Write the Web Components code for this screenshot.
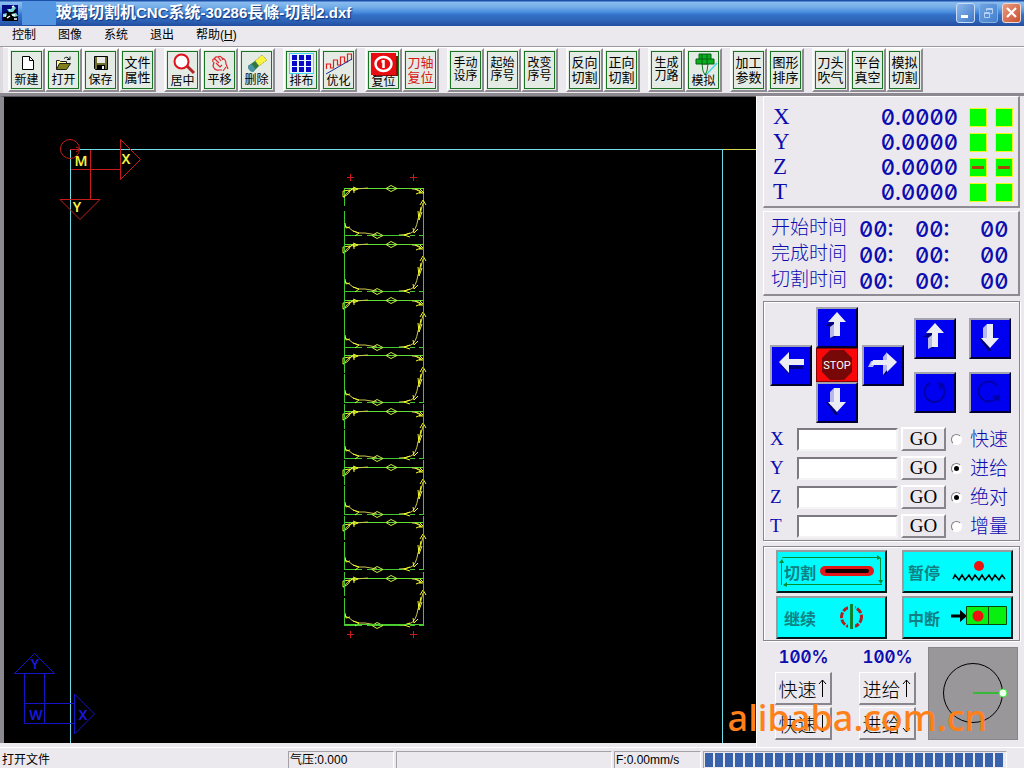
<!DOCTYPE html>
<html lang="zh-CN">
<head>
<meta charset="utf-8">
<title>玻璃切割机CNC系统</title>
<style>
  html, body { margin: 0; height: 100%; }
  body { background: #ebe9ed; }
</style>
</head>
<body>
<cnc-app></cnc-app>
<script>
const define = (name, html, setup) => {
  const template = document.createElement('template');
  template.innerHTML = html;
  customElements.define(name, class extends HTMLElement {
    constructor() {
      super();
      this.attachShadow({ mode: 'open' }).append(template.content.cloneNode(true));
    }
    connectedCallback() {
      if (setup && !this.ready) setup(this, this.shadowRoot);
      this.ready = true;
    }
  });
};

/* ---------- title bar ---------- */
define('title-bar', `
<style>
  :host { display: flex; align-items: center; height: 26px; box-sizing: border-box; padding: 0 3px 1px 2px; color: #fff;
    background: linear-gradient(#1c4fa8 0, #1c4fa8 1px, #8abdf0 2px, #74ade8 7px, #4a8ede 12px, #3370c8 15px, #2f66ba 20px, #2450a4 25px); }
  .logo { width: 18px; height: 18px; flex: none; }
  .patch { width: 34px; height: 24px; margin-left: 2px; background: #5596e3; flex: none; }
  h1 { flex: 1; margin: 0; font-size: 16px; line-height: 24px; font-weight: 700; white-space: nowrap; text-shadow: 1px 1px 1px #10357c; }
  h1 span { font-size: 15px; }
  .controls { display: flex; gap: 4px; }
  button { width: 19px; height: 20px; padding: 0; border: 1px solid #c8dcf6; border-radius: 3px; background: linear-gradient(135deg, #8db8ec, #3f78c8); display: grid; place-items: center; }
  button.dim { border-color: #86b0e4; background: linear-gradient(135deg, #6ea3e2, #4580cc); }
  button.close { border-color: #f0d8d0; background: linear-gradient(135deg, #e99a80, #c9512f); }
  svg { display: block; }
</style>
<svg class="logo" viewBox="0 0 18 18"><rect x="0" y="1" width="16" height="16" fill="#020a80"/><path d="M1 12 5 7 8 9 12 3 15 6 13 9 16 11V17H1Z" fill="#000"/><path d="M5 5h4l3-3 2 2-3 4H7ZM1 10l4-1-1 4H1Zm8 0 5-1 2 3-4 1Z" fill="#7fd8d0"/><path d="M10 3l2-1M3 11l1 1M10 11h3M7 6h1M5 14l3-2M12 15h3" stroke="#fff" stroke-width="1.5"/></svg>
<span class="patch"></span>
<h1>玻璃切割机<span>CNC</span>系统<span>-30286</span>長條<span>-</span>切割<span>2.dxf</span></h1>
<div class="controls">
  <button aria-label="最小化"><svg width="15" height="16"><path d="M3 11.5h7" stroke="#fff" stroke-width="3"/></svg></button>
  <button class="dim" aria-label="还原"><svg width="15" height="16" fill="none" stroke="#b4d0f2"><path d="M5.500 6V3.500h6v5h-2M5.500 4.500h6M3.500 7.500h5v5h-5ZM3.500 8.500h5"/></svg></button>
  <button class="close" aria-label="关闭"><svg width="15" height="16"><path d="M3 3 12 12M12 3 3 12" stroke="#fff" stroke-width="2.200"/></svg></button>
</div>`);

/* ---------- menu ---------- */
define('menu-bar', `
<style>
  :host { display: block; height: 20px; border-bottom: 1px solid #9c9aa0; box-shadow: 0 1px #fff; }
  nav { display: flex; gap: 22px; padding: 0 12px; }
  a { color: #000; text-decoration: none; font-size: 12px; line-height: 18px; white-space: nowrap; }
</style>
<nav><a href="#control">控制</a><a href="#image">图像</a><a href="#system">系统</a><a href="#exit">退出</a><a href="#help">帮助(<u>H</u>)</a></nav>`);

/* ---------- tool button ---------- */
define('tool-button', `
<style>
  :host { display: block; width: 37px; color: #000; }
  button { font: inherit; color: inherit; width: 100%; height: 44px; box-sizing: border-box; padding: 1px; display: flex; background: #e4ebe4;
    border: 2px solid; border-color: #fbfbfb #8e8c92 #8e8c92 #fbfbfb; }
  .face { flex: 1; min-width: 0; height: 38px; box-sizing: border-box; border: 1px solid #1a7424; display: flex; flex-direction: column; align-items: center; justify-content: center; }
  .label { display: block; font-size: 12px; line-height: 13px; white-space: pre; text-align: center; }
  :host([large]) .label { font-size: 13px; line-height: 15px; }
  :host([alert]) { color: #d81818; }
  ::slotted(svg) { display: block; flex: none; }
</style>
<button><span class="face"><slot name="icon"></slot><span class="label"><slot></slot></span></span></button>`);

const icons = {
  newFile: `<svg slot="icon" width="26" height="20"><path d="M8.500 2.500h7l4 4v9h-11Z" fill="#fff" stroke="#000"/><path d="M15.500 2.500v4h4" fill="none" stroke="#000"/></svg>`,
  open: `<svg slot="icon" width="26" height="20"><path d="M5.500 15.500v-9h3l1 1h6v2" fill="#ffff90" stroke="#222"/><path d="M5.500 15.500 8.500 9.500h11l-4 6Z" fill="#80801a" stroke="#222"/><path d="M13 4.500q3-3 5.500 1M16 5.500h3v-3" fill="none" stroke="#111"/></svg>`,
  save: `<svg slot="icon" width="26" height="20"><path d="M6.500 2.500h13v13h-12l-1-1Z" fill="#70702c" stroke="#000"/><path d="M9 3h8v6H9Z" fill="#e8e8e8"/><path d="M9 11h8v4H9Z" fill="#000"/><path d="M14 12h2v3h-2Z" fill="#eee"/></svg>`,
  centre: `<svg slot="icon" width="28" height="22"><path d="m18 13 7 7" stroke="#b02828" stroke-width="3"/><circle cx="12.500" cy="8.500" r="7" fill="#fff" stroke="#e0101c" stroke-width="2"/></svg>`,
  pan: `<svg slot="icon" width="28" height="20" fill="none" stroke="#e02830" stroke-width="1.200"><path d="M7 8q-1-4 2-3l4 4M9 6q-1-4 3-3l3 4M12 3q3-2 5 3M16 4q4 1 4 6l2 5M8 8l-1 4q2 5 6 4h3M10 9l4 4 2-2M20 13l-3 4"/></svg>`,
  erase: `<svg slot="icon" width="28" height="21"><path d="m12 8 7-6 5 5-8 6Z" fill="#f8f440" stroke="#a09a20" stroke-dasharray="1 1"/><path d="m5 13 7-5 4 5-6 6q-5-1-5-6Z" fill="#30783c"/><path d="m5 13 3-2q4 3 4 6l-2 2q-5-1-5-6Z" fill="#4a94a8"/></svg>`,
  grid: `<svg slot="icon" width="28" height="23"><rect x="1.500" y="1.500" width="24" height="20" fill="#e6f6fc" stroke="#40d8f0"/><path d="M4 3h5v5H4Zm7 0h5v5h-5Zm7 0h5v5h-5ZM4 9h5v5H4Zm7 0h5v5h-5Zm7 0h5v5h-5ZM4 15h5v5H4Zm7 0h5v5h-5Zm7 0h5v5h-5Z" fill="#0808c8"/></svg>`,
  optimise: `<svg slot="icon" width="28" height="23"><path d="M1.500 17v-5h4v4h3V8h4v5h3V5h4v5h3V2h4v6" fill="none" stroke="#e02020" stroke-width="1.200"/><path d="M1 22 27 7" stroke="#202890"/></svg>`,
  reset: `<svg slot="icon" width="28" height="24"><path d="M3 4h25v20H3Z" fill="#8c0c0c"/><path d="M1 1h25v22H1Z" fill="#e80c10"/><ellipse cx="13.500" cy="12" rx="8" ry="7" fill="none" stroke="#fff" stroke-width="2.500"/><path d="M13.500 8v8M11.500 9.500h3" stroke="#fff" stroke-width="2.500"/></svg>`,
  simulate: `<svg slot="icon" width="28" height="23"><path d="m16 23 11-12" stroke="#40d8e0" stroke-width="1.500"/><path d="M12 12h6l-1 7-2 4-2-4Z" fill="#e8e8e8" stroke="#0a7818"/><path d="M9 2h12v5h3v5H6V7h3Z" fill="#08b020" stroke="#046010"/><path d="M12 2v10M17 2v10M9 7h12" stroke="#046010"/></svg>`
};

define('tool-bar', `
<style>
  :host { display: flex; gap: 8px; padding: 1px 8px 0; height: 45px; border-bottom: 3px solid #8c8a90; box-shadow: inset 3px 0 #dcdade; }
  .group { display: flex; flex: none; }
</style>`, (host, root) => {
  const groups = [
    [['新建', 'newFile'], ['打开', 'open'], ['保存', 'save'], ['文件\n属性', '', 'large']],
    [['居中', 'centre'], ['平移', 'pan'], ['删除', 'erase']],
    [['排布', 'grid'], ['优化', 'optimise']],
    [['复位', 'reset'], ['刀轴\n复位', '', 'large alert']],
    [['手动\n设序'], ['起始\n序号'], ['改变\n序号']],
    [['反向\n切割', '', 'large'], ['正向\n切割', '', 'large']],
    [['生成\n刀路'], ['模拟', 'simulate']],
    [['加工\n参数', '', 'large'], ['图形\n排序', '', 'large']],
    [['刀头\n吹气', '', 'large'], ['平台\n真空', '', 'large'], ['模拟\n切割', '', 'large']]
  ];
  for (const g of groups) {
    const div = document.createElement('div');
    div.className = 'group';
    div.innerHTML = g.map(([t, i, a]) => `<tool-button ${a || ''}>${i ? icons[i] : ''}${t}</tool-button>`).join('');
    root.append(div);
  }
});

/* ---------- drawing area ---------- */
define('cut-canvas', `
<style>
  :host { display: block; background: #000; border-left: 4px solid #8c8a90; border-top: 1px solid #55535a; min-width: 0; overflow: hidden; position: relative; }
  svg { position: absolute; inset: 0; width: 100%; height: 100%; display: block; }
  text { font-family: "Noto Sans", sans-serif; font-weight: 600; font-size: 14px; text-anchor: middle; }
</style>
<svg viewBox="4 97 752 646" preserveAspectRatio="xMinYMin slice" fill="none">
  <defs>
    <g id="piece">
      <path d="M344.500 188v18M344.500 211v25M423.500 188v48" stroke="#40c830"/>
      <path d="M344 188.500h80" stroke="#60e030"/>
      <path d="M344 235.500h18M367 235.500h38M410 235.500h5M419 235.500h5" stroke="#40c830"/>
      <path d="M344 198q2-8 12-9l12-1M412 189q8 0 10 4M423 203q-2 9-5 16-2 12-7 14-4 2-12 2M345 226q5 2 8 5 5 3 12 2l12 2" stroke="#d0c850"/>
      <path d="M386 188.500l5-3 6 3-6 3ZM372 235.500l5-3 6 3-6 3Z" stroke="#c8f048"/>
      <path d="M343 197v-6l7-1q0 4-7 7M349 191l5-3v5M353 187l5 2-5 2M415 189l6 3-5 2M420 189l4 4h-5M420 205l3-5 3 5M418 211l1 9 3-8M419 217l2-10M413 228l1 5 4-4M410 233l-6 2 6 2M345 223l1 5 4-1M353 231l6 2-4 3" stroke="#f0f828"/>
    </g>
    <path id="mark" d="M-3 .5h7M.5-3v7" stroke="#d01818"/>
  </defs>
  <path d="M70.500 149v594M70 149.500h652M722.500 149v594" stroke="#70dce8"/>
  <path d="M723 149.500h33" stroke="#d0d850"/>
  <g stroke="#c81c1c"><circle cx="70" cy="149" r="9.500"/><path d="M70 149.500h10M76 147l4 2-4 3M71 169.500h49M90.500 150v49M120.500 139.500v40l20-20ZM60 199.500h40l-20 20Z"/></g>
  <g fill="#f8f040"><text x="81" y="166">M</text><text x="126" y="164">X</text><text x="77" y="212">Y</text></g>
  <g stroke="#1414c8"><path d="M14.500 673.500h40l-20-20ZM24.500 674v49.500h50M44.500 674v49M25 703.500h50M74.500 694v40l20-20Z"/></g>
  <g fill="#1818e0"><text x="35" y="669">Y</text><text x="36" y="720">W</text><text x="83" y="720">X</text></g>
  <use href="#piece"/><use href="#piece" y="56"/><use href="#piece" y="112"/><use href="#piece" y="167"/>
  <use href="#piece" y="223"/><use href="#piece" y="279"/><use href="#piece" y="334"/><use href="#piece" y="390"/>
  <path d="M344.500 236v390M423.500 236v390" stroke="#40c830" stroke-dasharray="22 4 28 2"/>
  <path d="M344 624.500h80" stroke="#50d030"/>
  <use href="#mark" x="350" y="177"/><use href="#mark" x="413" y="177"/><use href="#mark" x="350" y="634"/><use href="#mark" x="413" y="634"/>
</svg>`);

/* ---------- axis positions ---------- */
define('axis-readout', `
<style>
  :host { display: block; padding: 7px 5px 2px 9px; border: 1px solid; border-width: 1px 2px 2px 1px; border-color: #fff #8e8c92 #8e8c92 #fff; color: #0c0cb0; }
  .row { display: grid; grid-template-columns: 1fr auto 18px 18px; column-gap: 8px; align-items: center; height: 25px; }
  .axis { font: 23px "Liberation Serif", serif; }
  .value { font: 500 22px/25px Inter, sans-serif; font-feature-settings: "zero", "tnum"; padding-right: 3px; }
  i { display: grid; place-items: center; height: 19px; box-sizing: border-box; background: #0f0; border: 1px solid #f0f820; }
  i[off]::after { content: ""; width: 12px; height: 3px; background: #a84808; }
</style>`, (host, root) => {
  for (const a of 'XYZT') {
    const row = document.createElement('div');
    row.className = 'row';
    const lamp = a === 'Z' ? '<i off></i>' : '<i></i>';
    row.innerHTML = `<span class="axis">${a}</span><span class="value">0.0000</span>${lamp}${lamp}`;
    root.append(row);
  }
});

/* ---------- times ---------- */
define('time-readout', `
<style>
  :host { display: block; padding: 4px 5px 0 7px; border: 1px solid; border-width: 1px 2px 2px 1px; border-color: #fff #8e8c92 #8e8c92 #fff; color: #0c0cb0; }
  .row { display: grid; grid-template-columns: 88px 56px 65px 1fr; height: 26px; line-height: 26px; }
  .name { font-size: 19px; font-weight: 300; line-height: 24px; }
  .num { font: 500 22px/26px Inter, sans-serif; font-feature-settings: "zero", "tnum"; }
</style>`, (host, root) => {
  for (const n of ['开始时间', '完成时间', '切割时间']) {
    const row = document.createElement('div');
    row.className = 'row';
    row.innerHTML = `<span class="name">${n}</span><span class="num">00:</span><span class="num">00:</span><span class="num">00</span>`;
    root.append(row);
  }
});

/* ---------- jog buttons ---------- */
const ARROWS = {
  up: `<path d="M7 17 19 8v18l-3 3-4-3v-9Z" fill="#000078"/><path d="m12 18 4-3v12l-4 2Z" fill="#b8b8ec"/><path d="M19 3 28 13h-6v14h-6V13h-6Z" fill="#ececf4"/>`,
  down: `<path d="M8 18 17 31l3 0-5-13Z" fill="#000078"/><path d="m12 8 4-4v14l-4 3Z" fill="#b8b8ec"/><path d="M16 4h6v14h6l-9 10-9-10h6Z" fill="#ececf4"/>`,
  left: `<path d="m8 18 9 9v-5h14v-3Z" fill="#000078"/><path d="M7 15 17 5v7h15v6H17v8Z" fill="#ececf4"/>`,
  right: `<path d="M11 20h9v9l8-10" fill="#000078"/><path d="m4 20 3-6h5l-3 6ZM19 28V10l4-5v18Z" fill="#b8b8ec"/><path d="M9 13h14V6l10 9-10 10v-7H7Z" fill="#ececf4"/>`,
  ccw: `<path d="M14 9A10 10 0 1 0 27 13" fill="none" stroke="#0000a8" stroke-width="2"/><path d="m22 8 7 2-5 6Z" fill="#0000a8"/>`,
  cw: `<path d="M26 23A10 10 0 1 1 26 12" fill="none" stroke="#0000a8" stroke-width="2"/><path d="m21 22 8-1-1 7Z" fill="#0000a8"/>`
};
define('jog-button', `
<style>
  :host { display: block; }
  button { display: block; width: 42px; height: 41px; padding: 0; box-sizing: border-box; border: 2px solid; border-color: #a4a4b0 #000030 #000030 #a4a4b0; background: #0000f0; }
  svg { display: block; width: 38px; height: 37px; }
</style>
<button><svg viewBox="0 0 38 37"></svg></button>`, (host, root) => {
  root.querySelector('svg').innerHTML = ARROWS[host.getAttribute('dir')];
  root.querySelector('button').setAttribute('aria-label', host.getAttribute('dir'));
});

define('jog-panel', `
<style>
  :host { display: block; padding: 5px 5px 3px 6px; border: 1px solid #88868c; box-shadow: 1px 1px #fff, inset 1px 1px #fff; color: #0c0cb0; }
  .pads { display: flex; align-items: center; gap: 4px; padding-bottom: 4px; }
  .stack { display: flex; flex-direction: column; }
  .stop { width: 42px; height: 34px; padding: 0; border: 1px solid #800; background: #f80808; display: grid; place-items: center; }
  .stop span { grid-area: 1/1; color: #fff; font: 11px Roboto, sans-serif; }
  .stop svg { grid-area: 1/1; display: block; }
  .aux { display: grid; grid-template-columns: 42px 42px; gap: 13px; margin-left: 6px; }
  .rows { display: grid; gap: 6px; }
  .row { display: grid; grid-template-columns: 27px 101px 48px 20px 1fr; height: 23px; align-items: center; }
  .row label:first-child { font: 19px "Liberation Serif", serif; }
  input[type=text] { height: 23px; width: 100%; box-sizing: border-box; border: 2px solid; border-color: #7c7a80 #f4f4f4 #f4f4f4 #7c7a80; background: #fff; margin: 0; padding: 0 3px; }
  .go { margin-left: 3px; width: 45px; height: 24px; padding: 0; border: 2px solid; border-color: #fff #88868c #88868c #fff; background: #ebe9ed; font: 19px/20px "Liberation Serif", serif; color: #000; }
  input[type=radio] { appearance: none; width: 11px; height: 11px; margin: 0 0 0 5px; border-radius: 50%; border: 1px solid; border-color: #807e84 #fff #fff #807e84; background: #fff; display: grid; place-items: center; }
  input[type=radio]:checked::after { content: ""; width: 5px; height: 5px; border-radius: 50%; background: #000; }
  .mode { font-size: 19px; line-height: 23px; font-weight: 300; padding-left: 4px; white-space: nowrap; }
</style>
<div class="pads">
  <jog-button dir="left"></jog-button>
  <div class="stack"><jog-button dir="up"></jog-button>
    <button class="stop"><svg width="32" height="32"><path d="M9 1h14l8 8v14l-8 8H9l-8-8V9Z" fill="#780808"/></svg><span>STOP</span></button>
    <jog-button dir="down"></jog-button></div>
  <jog-button dir="right"></jog-button>
  <div class="aux"><jog-button dir="up"></jog-button><jog-button dir="down"></jog-button><jog-button dir="ccw"></jog-button><jog-button dir="cw"></jog-button></div>
</div>
<div class="rows"></div>`, (host, root) => {
  const modes = [['X', '快速', 'speed', ''], ['Y', '进给', 'speed', 'checked'], ['Z', '绝对', 'coord', 'checked'], ['T', '增量', 'coord', '']];
  root.querySelector('.rows').innerHTML = modes.map(([a, m, n, c]) => `
    <div class="row"><label for="in${a}">${a}</label><input type="text" id="in${a}"><button class="go">GO</button><input type="radio" id="r${a}" name="${n}" ${c}><label class="mode" for="r${a}">${m}</label></div>`).join('');
});

/* ---------- cut / pause / resume / abort ---------- */
define('action-panel', `
<style>
  :host { display: grid; grid-template-columns: 111px 111px; justify-content: space-between; row-gap: 3px; padding: 3px 6px 1px 12px; border: 1px solid #88868c; box-shadow: 1px 1px #fff, inset 1px 1px #fff; }
  button { display: grid; align-items: center; justify-items: start; padding: 0; height: 43px; box-sizing: border-box; border: 2px solid; border-color: #989ca0 #001818 #001818 #989ca0; background: #00fcfc; color: #108084; font: inherit; font-size: 16px; font-weight: 700; }
  svg, span { grid-area: 1/1; }
  svg { display: block; width: 107px; height: 39px; }
  span { padding-left: 6px; }
  .wide span { padding-left: 4px; }
</style>
<button><svg viewBox="0 0 107 39" fill="none"><g stroke="#008c30"><path d="M4 5.500h96M102.500 6v24M104 32.500H8M3.500 33V9"/></g><path d="m99 3 4 3-4 2ZM100 28h5l-2 4ZM9 30l-4 3 4 2ZM1 11h5l-2-4Z" fill="#008c30"/><path d="M47 19h44" stroke="#e01818" stroke-width="10" stroke-linecap="round"/><path d="M49 19h40" stroke="#180000" stroke-width="4" stroke-linecap="round"/></svg><span>切割</span></button>
<button class="wide"><svg viewBox="0 0 107 39" fill="none"><circle cx="75" cy="14" r="5" fill="#f01010"/><path d="m49 27 2-4 4 5 3-5 3 5 4-5 3 5 3-5 4 5 3-5 3 5 4-5 3 5 3-5 4 5 3-5 3 4" stroke="#000" stroke-width="1.500"/></svg><span>暂停</span></button>
<button><svg viewBox="0 0 107 39" fill="none"><circle cx="73.500" cy="19" r="10" stroke="#b02020" stroke-width="3" stroke-dasharray="6 1.500"/><path d="M73.500 7v25" stroke="#00fcfc" stroke-width="7"/><path d="M73.500 6v25" stroke="#088430" stroke-width="3"/></svg><span>继续</span></button>
<button class="wide"><svg viewBox="0 0 107 39" fill="none"><path d="M47 18h12" stroke="#000" stroke-width="3"/><path d="m56 12 7 6-7 6Z" fill="#000"/><path d="M62.500 8.500h40v18h-40ZM84.500 8.500v18" fill="#08f010" stroke="#084808"/><circle cx="74" cy="18" r="5.500" fill="#f01010"/></svg><span>中断</span></button>`);

/* ---------- override + dial ---------- */
define('speed-panel', `
<style>
  :host { display: grid; grid-template-columns: 84px 69px 90px; align-items: start; padding: 2px 0 0 12px; }
  .col { width: 57px; display: grid; gap: 2px; }
  output { font: 600 17px/20px Inter, sans-serif; font-feature-settings: "zero", "tnum"; color: #0c0cb0; text-align: center; padding-bottom: 3px; }
  button { height: 33px; padding: 0; border: 1px solid; border-width: 1px 2px 2px 1px; border-color: #fff #88868c #88868c #fff; background: #ebe9ed; font: inherit; font-size: 19px; font-weight: 300; color: #000; white-space: nowrap; display: flex; align-items: center; justify-content: center; }
  button svg { width: 11px; height: 22px; fill: none; stroke: #000; }
  .dial { display: block; width: 90px; height: 93px; background: #999799; }
</style>
<div class="col"><output>100%</output><button aria-label="快速加">快速<svg><path d="M5.500 20V3M2 7l3.500-4L9 7"/></svg></button><button aria-label="快速减">快速<svg><path d="M5.500 3v17M2 16l3.500 4L9 16"/></svg></button></div>
<div class="col"><output>100%</output><button aria-label="进给加">进给<svg><path d="M5.500 20V3M2 7l3.500-4L9 7"/></svg></button><button aria-label="进给减">进给<svg><path d="M5.500 3v17M2 16l3.500 4L9 16"/></svg></button></div>
<svg class="dial" viewBox="0 0 90 93"><rect x=".5" y=".5" width="89" height="92" fill="none" stroke="#88868a"/><circle cx="45" cy="46" r="29.500" fill="none" stroke="#000"/><path d="M45 46h30" stroke="#38b838" stroke-width="2"/><circle cx="75" cy="46" r="4" fill="#f0fff0" stroke="#40e840"/></svg>`);

/* ---------- status bar ---------- */
define('status-bar', `
<style>
  :host { display: grid; grid-template-columns: 284px 106px 1fr 87px 304px 15px; column-gap: 2px; height: 17px; padding: 3px 0 0 2px; border-top: 1px solid #fff; font-size: 12px; line-height: 18px; white-space: nowrap; color: #000; }
  .cell { border: 1px solid; border-color: #a4a2a8 #fff #fff #a4a2a8; padding-left: 1px; line-height: 16px; box-sizing: border-box; }
  .bar { background: repeating-linear-gradient(90deg, #3862ac 0 8px, #ebe9ed 8px 10px) content-box; padding: 1px; }
</style>
<span>打开文件</span><span class="cell">气压:0.000</span><span class="cell"></span><span class="cell">F:0.00mm/s</span><span class="cell bar"></span>`);

/* ---------- page ---------- */
define('cnc-app', `
<style>
  :host { display: flex; flex-direction: column; min-height: 100vh; background: #ebe9ed; position: relative; font-family: "Liberation Sans", "Noto Sans CJK SC", sans-serif; }
  main { flex: 1; display: grid; grid-template-columns: 1fr 268px; }
  cut-canvas { margin-bottom: 4px; }
  aside { padding: 0 4px 0 6px; border-left: 1px solid #fff; box-sizing: border-box; }
  time-readout { margin-top: 3px; }
  jog-panel, action-panel { margin-top: 5px; }
  speed-panel { margin: 4px -4px 0 0; }
  .mark { position: absolute; right: 37px; bottom: 26px; font: 500 36px/48px "Noto Sans", sans-serif; color: #ff7f18; pointer-events: none; }
</style>
<title-bar></title-bar>
<menu-bar></menu-bar>
<tool-bar></tool-bar>
<main>
  <cut-canvas></cut-canvas>
  <aside>
    <axis-readout></axis-readout>
    <time-readout></time-readout>
    <jog-panel></jog-panel>
    <action-panel></action-panel>
    <speed-panel></speed-panel>
  </aside>
</main>
<status-bar></status-bar>
<span class="mark">alibaba.com.cn</span>`);
</script>
</body>
</html>
